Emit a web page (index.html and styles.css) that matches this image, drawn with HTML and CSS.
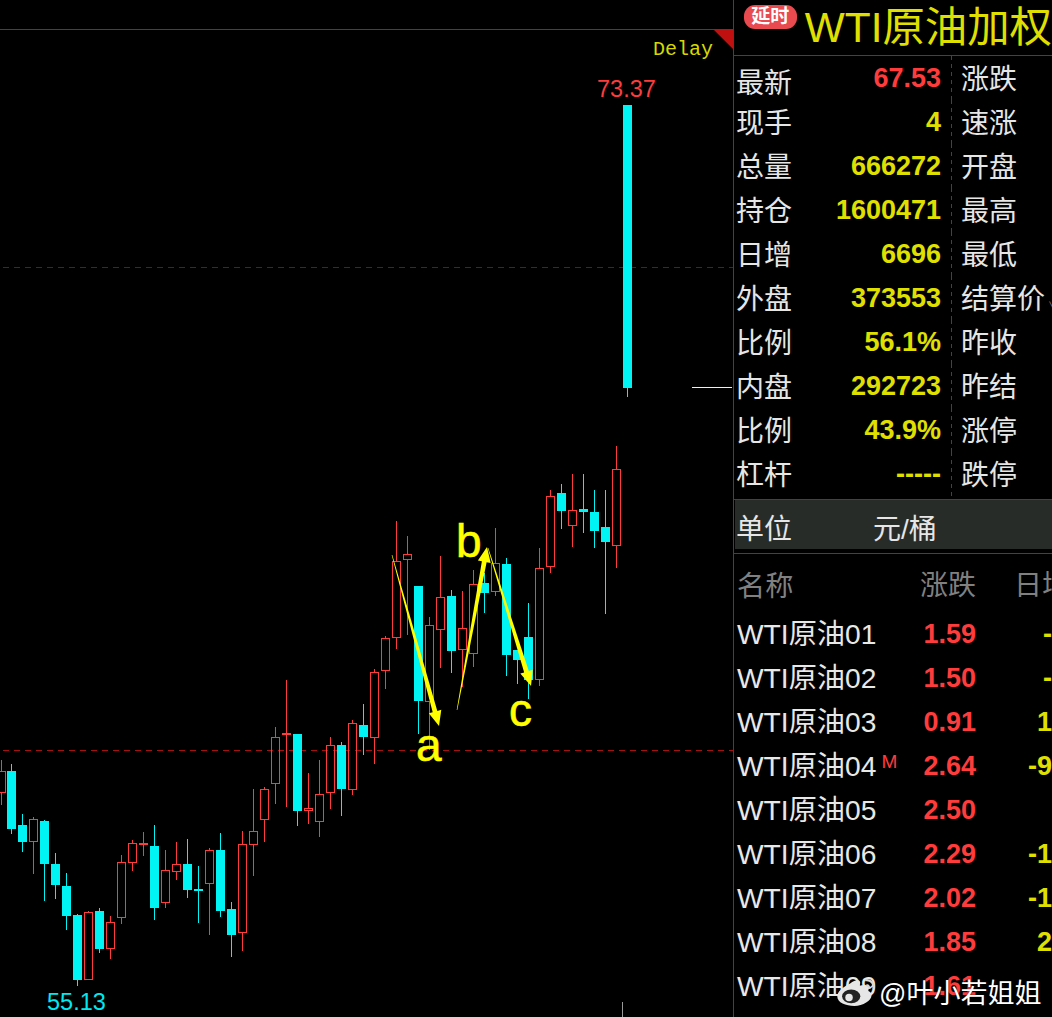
FILE: index.html
```html
<!DOCTYPE html>
<html lang="zh">
<head>
  <meta charset="UTF-8" />
  <title>WTI原油加权</title>
  <link rel="stylesheet" href="styles.css">
</head>
<body>

  <section class="chart">
    <svg id="kline" width="733" height="1017" viewBox="0 0 733 1017"></svg>
    <span class="delay">Delay</span>
    <span class="price high">73.37</span>
    <span class="price low">55.13</span>
    <span class="mark mark-a">a</span>
    <span class="mark mark-b">b</span>
    <span class="mark mark-c">c</span>
  </section>

  <aside class="panel">
    <header class="title">
      <span class="badge">延时</span>
      <h1>WTI原油加权</h1>
    </header>

    <div class="quote">
      <div class="row"><span class="label first">最新</span><b class="num red">67.53</b><span class="side">涨跌</span></div>
      <div class="row"><span class="label">现手</span><b class="num">4</b><span class="side">速涨</span></div>
      <div class="row"><span class="label">总量</span><b class="num">666272</b><span class="side">开盘</span></div>
      <div class="row"><span class="label">持仓</span><b class="num">1600471</b><span class="side">最高</span></div>
      <div class="row"><span class="label">日增</span><b class="num">6696</b><span class="side">最低</span></div>
      <div class="row"><span class="label">外盘</span><b class="num">373553</b><span class="side">结算价<i class="caret">∨</i></span></div>
      <div class="row"><span class="label">比例</span><b class="num">56.1%</b><span class="side">昨收</span></div>
      <div class="row"><span class="label">内盘</span><b class="num">292723</b><span class="side">昨结</span></div>
      <div class="row"><span class="label">比例</span><b class="num">43.9%</b><span class="side">涨停</span></div>
      <div class="row"><span class="label">杠杆</span><b class="num">-----</b><span class="side">跌停</span></div>
    </div>

    <div class="unit"><span>单位</span><span>元/桶</span></div>

    <div class="list">
      <div class="item head"><span class="name">名称</span><span class="chg">涨跌</span><span class="inc">日增</span></div>
      <div class="item"><span class="name">WTI原油01</span><b class="chg">1.59</b><b class="inc">-123</b></div>
      <div class="item"><span class="name">WTI原油02</span><b class="chg">1.50</b><b class="inc">-123</b></div>
      <div class="item"><span class="name">WTI原油03</span><b class="chg">0.91</b><b class="inc">1234</b></div>
      <div class="item"><span class="name">WTI原油04<i class="tag">M</i></span><b class="chg">2.64</b><b class="inc">-9123</b></div>
      <div class="item"><span class="name">WTI原油05</span><b class="chg">2.50</b><b class="inc">123</b></div>
      <div class="item"><span class="name">WTI原油06</span><b class="chg">2.29</b><b class="inc">-1234</b></div>
      <div class="item"><span class="name">WTI原油07</span><b class="chg">2.02</b><b class="inc">-1234</b></div>
      <div class="item"><span class="name">WTI原油08</span><b class="chg">1.85</b><b class="inc">2123</b></div>
      <div class="item"><span class="name">WTI原油09</span><b class="chg">1.61</b><b class="inc">123</b></div>
    </div>
  </aside>

  <div class="watermark">
    <svg width="40" height="30" viewBox="0 0 37 28">
      <path class="wb-body" d="M13 7c4-3 8-4 9-2 1 1 0 3 0 4 3-1 7-1 8 1 1 1 0 3 0 4 2 1 3 2 3 4 0 5-8 10-16 10C9 28 1 25 1 19c0-4 4-8 12-12z"/>
      <ellipse class="wb-hole" cx="14" cy="19" rx="8.5" ry="6.5"/>
      <circle class="wb-body" cx="12" cy="20" r="3.5"/>
      <path class="wb-tail" d="M27 4c5-1 9 3 8 8M28 9c2-1 3 1 3 3"/>
    </svg>
    <span>@叶小若姐姐</span>
  </div>

  <script src="chart.js"></script>
</body>
</html>
```

FILE: styles.css
```css
body {
  margin: 0;
  width: 1052px;
  height: 1017px;
  display: flex;
  position: relative;
  overflow: hidden;
  background: #000;
  color: #e6e6e6;
  font-family: "Liberation Sans", "Noto Sans CJK SC", sans-serif;
  font-size: 28px;
}

.chart {
  position: relative;
  flex: 0 0 733px;
  height: 1017px;
}

.chart svg {
  display: block;
}

.delay {
  position: absolute;
  left: 653px;
  top: 38px;
  font-family: "Liberation Mono", monospace;
  font-size: 20px;
  line-height: 24px;
  color: #d8d800;
}

.price {
  position: absolute;
  font-size: 23.5px;
  line-height: 28px;
}

.price.high {
  left: 597px;
  top: 75px;
  color: #ff3c3c;
}

.price.low {
  left: 47px;
  top: 988px;
  color: #00e8f0;
}

.mark {
  position: absolute;
  font-size: 46px;
  line-height: 52px;
  color: #ffff00;
  -webkit-text-stroke: 0.6px #ffff00;
}

.mark-a { left: 416px; top: 719px; }
.mark-b { left: 456px; top: 515px; }
.mark-c { left: 509px; top: 684px; }

.panel {
  flex: 1;
  min-width: 0;
  height: 1017px;
  overflow: hidden;
  border-left: 1px solid #b01515;
}

.title {
  display: flex;
  align-items: center;
  height: 55px;
  border-bottom: 1px solid #b01515;
  white-space: nowrap;
}

.badge {
  width: 56px;
  height: 24px;
  margin: -22px 8px 0 10px;
  border-radius: 11px;
  background: #e84a4f;
  color: #fff;
  font-size: 19px;
  font-weight: bold;
  line-height: 24px;
  text-align: center;
}

.title h1 {
  margin: 0;
  font-size: 42.4px;
  font-weight: normal;
  line-height: 53px;
  color: #e0e000;
}

.quote {
  height: 443px;
}

.row {
  display: flex;
  height: 44px;
  line-height: 48px;
  white-space: nowrap;
}

.label {
  flex: 0 0 60px;
  padding-left: 2px;
}

.label.first {
  padding-top: 4px;
}

.num {
  flex: 0 0 145px;
  padding-right: 11px;
  font-size: 27px;
  line-height: 45px;
  text-align: right;
  color: #e0e000;
  background: repeating-linear-gradient(#b01515 0 4px, transparent 4px 8px) right top / 1px 100% no-repeat;
}

.num.red {
  color: #ff3c3c;
}

.side {
  padding-left: 9px;
}

.caret {
  margin-left: 3px;
  font-size: 10px;
  font-style: normal;
  color: #808080;
}

.unit {
  display: flex;
  height: 53px;
  padding-left: 2px;
  border-top: 1px solid #b01515;
  border-bottom: 1px solid #b01515;
  line-height: 60px;
  background: linear-gradient(#282c28, #282c28) 1px 0 / 100% 49px no-repeat;
}

.unit span:first-child {
  width: 137px;
}

.list {
  white-space: nowrap;
}

.item {
  display: flex;
  height: 44px;
  line-height: 45px;
  padding-left: 3px;
  color: #e8e8e8;
}

.item.head {
  height: 58px;
  line-height: 64px;
  color: #808080;
}

.name {
  flex: 0 0 170px;
  font-size: 28.2px;
}

.chg {
  flex: 0 0 69px;
  text-align: right;
  font-size: 27px;
  color: #ff3c3c;
}

.inc {
  flex: 0 0 121px;
  text-align: right;
  font-size: 27px;
  color: #e0e000;
}

.head .chg,
.head .inc {
  font-size: 28px;
  color: #808080;
}

.head .inc {
  flex-basis: 94px;
}

.tag {
  margin-left: 5px;
  font-size: 19px;
  font-style: normal;
  vertical-align: 8px;
  line-height: 0;
  color: #ff3c3c;
}

/* watermark sits on top of the last rows */
.watermark {
  position: absolute;
  left: 836px;
  top: 973px;
  display: flex;
  align-items: center;
  gap: 3px;
  height: 36px;
  font-size: 27px;
  color: #fff;
  text-shadow: 0 0 2px rgba(0,0,0,0.8);
  white-space: nowrap;
}

.wb-body { fill: #e6e6e6; }
.wb-hole { fill: #222; }
.wb-tail { fill: none; stroke: #d8d8d8; stroke-width: 2; }

.line { stroke-width: 1; shape-rendering: crispEdges; }
.frame { stroke: #b01515; }
.dash-dim { stroke: #7a0f0f; stroke-dasharray: 6 5; }
.dash { stroke: #a81010; stroke-dasharray: 6 5; }
.white { stroke: #f0f0f0; }
.tick { stroke: #999; }
.corner { fill: #c01010; }
.up { fill: none; stroke: #ff3c3c; stroke-width: 1; shape-rendering: crispEdges; }
.up-wick { fill: #ff3c3c; shape-rendering: crispEdges; }
.down, .down-wick { fill: #00f4f4; shape-rendering: crispEdges; }
.arrow { fill: #ffff00; }
```

FILE: chart.js
```js
// x, body top, body bottom, wick top, wick bottom, r = hollow red / c = solid cyan
const candles = [
  [1, 771, 793, 760, 805, 'r'], [11, 771, 829, 764, 834, 'c'], [22, 825, 842, 814, 852, 'c'],
  [33, 819, 842, 817, 874, 'r'], [44, 821, 864, 820, 901, 'c'], [55, 864, 885, 853, 899, 'c'],
  [66, 886, 916, 873, 930, 'c'], [77, 915, 980, 914, 986, 'c'], [88, 912, 980, 911, 980, 'r'],
  [99, 911, 949, 908, 953, 'c'], [110, 922, 949, 916, 959, 'r'], [121, 862, 918, 855, 924, 'r'],
  [132, 843, 863, 840, 871, 'r'], [143, 843, 845, 832, 856, 'r'], [154, 846, 908, 825, 920, 'c'],
  [165, 870, 903, 850, 908, 'r'], [176, 864, 872, 842, 880, 'r'], [187, 864, 890, 839, 898, 'c'],
  [198, 889, 891, 866, 923, 'c'], [209, 850, 884, 848, 935, 'r'], [220, 850, 911, 833, 917, 'c'],
  [231, 909, 935, 902, 957, 'c'], [242, 844, 933, 831, 951, 'r'], [253, 831, 845, 789, 876, 'r'],
  [264, 789, 820, 787, 842, 'r'], [275, 737, 784, 727, 804, 'r'], [286, 733, 735, 680, 807, 'r'],
  [297, 734, 811, 734, 826, 'c'], [308, 808, 811, 773, 824, 'r'], [319, 794, 822, 760, 837, 'r'],
  [330, 745, 793, 737, 809, 'r'], [341, 745, 789, 742, 816, 'c'], [352, 723, 790, 720, 795, 'r'],
  [363, 725, 737, 704, 755, 'c'], [374, 672, 738, 669, 764, 'r'], [385, 638, 671, 636, 689, 'r'],
  [396, 561, 638, 521, 649, 'r'], [407, 554, 560, 536, 635, 'r'], [418, 586, 701, 586, 734, 'c'],
  [429, 625, 702, 617, 750, 'r'], [440, 597, 630, 556, 668, 'r'], [451, 596, 651, 590, 673, 'c'],
  [462, 628, 650, 591, 687, 'r'], [473, 584, 654, 570, 667, 'r'], [484, 583, 593, 573, 613, 'c'],
  [495, 563, 592, 528, 596, 'r'], [506, 564, 655, 558, 676, 'c'], [517, 650, 660, 650, 684, 'c'],
  [528, 637, 680, 603, 699, 'c'], [539, 568, 680, 548, 686, 'r'], [550, 496, 567, 490, 573, 'r'],
  [561, 493, 511, 484, 529, 'c'], [572, 510, 526, 474, 547, 'r'], [583, 509, 512, 474, 533, 'c'],
  [594, 512, 531, 490, 548, 'c'], [605, 527, 542, 490, 614, 'c'], [616, 469, 546, 446, 568, 'r'],
  [627, 105, 388, 105, 397, 'c']
];

const svg = document.getElementById('kline');

function add(tag, cls, attrs) {
  const el = document.createElementNS('http://www.w3.org/2000/svg', tag);
  el.setAttribute('class', cls);
  for (const k in attrs) el.setAttribute(k, attrs[k]);
  svg.appendChild(el);
}

function hline(cls, y, x1, x2) {
  add('line', 'line ' + cls, { x1: x1, x2: x2, y1: y + 0.5, y2: y + 0.5 });
}

hline('frame', 29, 0, 733);
hline('dash-dim', 267, 3, 733);
hline('dash', 750, 3, 733);
hline('white', 387, 692, 732);
add('line', 'line tick', { x1: 622.5, x2: 622.5, y1: 1002, y2: 1017 });
add('polygon', 'corner', { points: '713,29 733,29 733,49' });

candles.forEach(function (c) {
  const x = c[0], top = c[1], bottom = c[2];
  const wick = c[5] === 'r' ? 'up-wick' : 'down-wick';
  add('rect', wick, { x: x, y: c[3], width: 1, height: top - c[3] });
  add('rect', wick, { x: x, y: bottom, width: 1, height: c[4] - bottom });
  if (c[5] === 'r') {
    add('rect', 'up', { x: x - 3.5, y: top + 0.5, width: 8, height: bottom - top - 1 });
  } else {
    add('rect', 'down', { x: x - 4, y: top, width: 9, height: bottom - top });
  }
});

// tapered hand-drawn arrows: thin at the start, barbed head at the tip
function arrow(x1, y1, x2, y2) {
  const len = Math.hypot(x2 - x1, y2 - y1);
  const dx = (x2 - x1) / len, dy = (y2 - y1) / len;
  const bx = x2 - dx * 15, by = y2 - dy * 15;
  const pt = function (x, y, w) { return (x - dy * w).toFixed(1) + ',' + (y + dx * w).toFixed(1); };
  add('polygon', 'arrow', {
    points: [pt(x1, y1, 0.3), pt(bx, by, 2.4), pt(bx, by, 6.5), x2 + ',' + y2, pt(bx, by, -6.5), pt(bx, by, -2.4), pt(x1, y1, -0.3)].join(' ')
  });
}

arrow(392, 555, 439, 726);
arrow(457, 710, 487, 547);
arrow(488, 548, 531, 686);
```
